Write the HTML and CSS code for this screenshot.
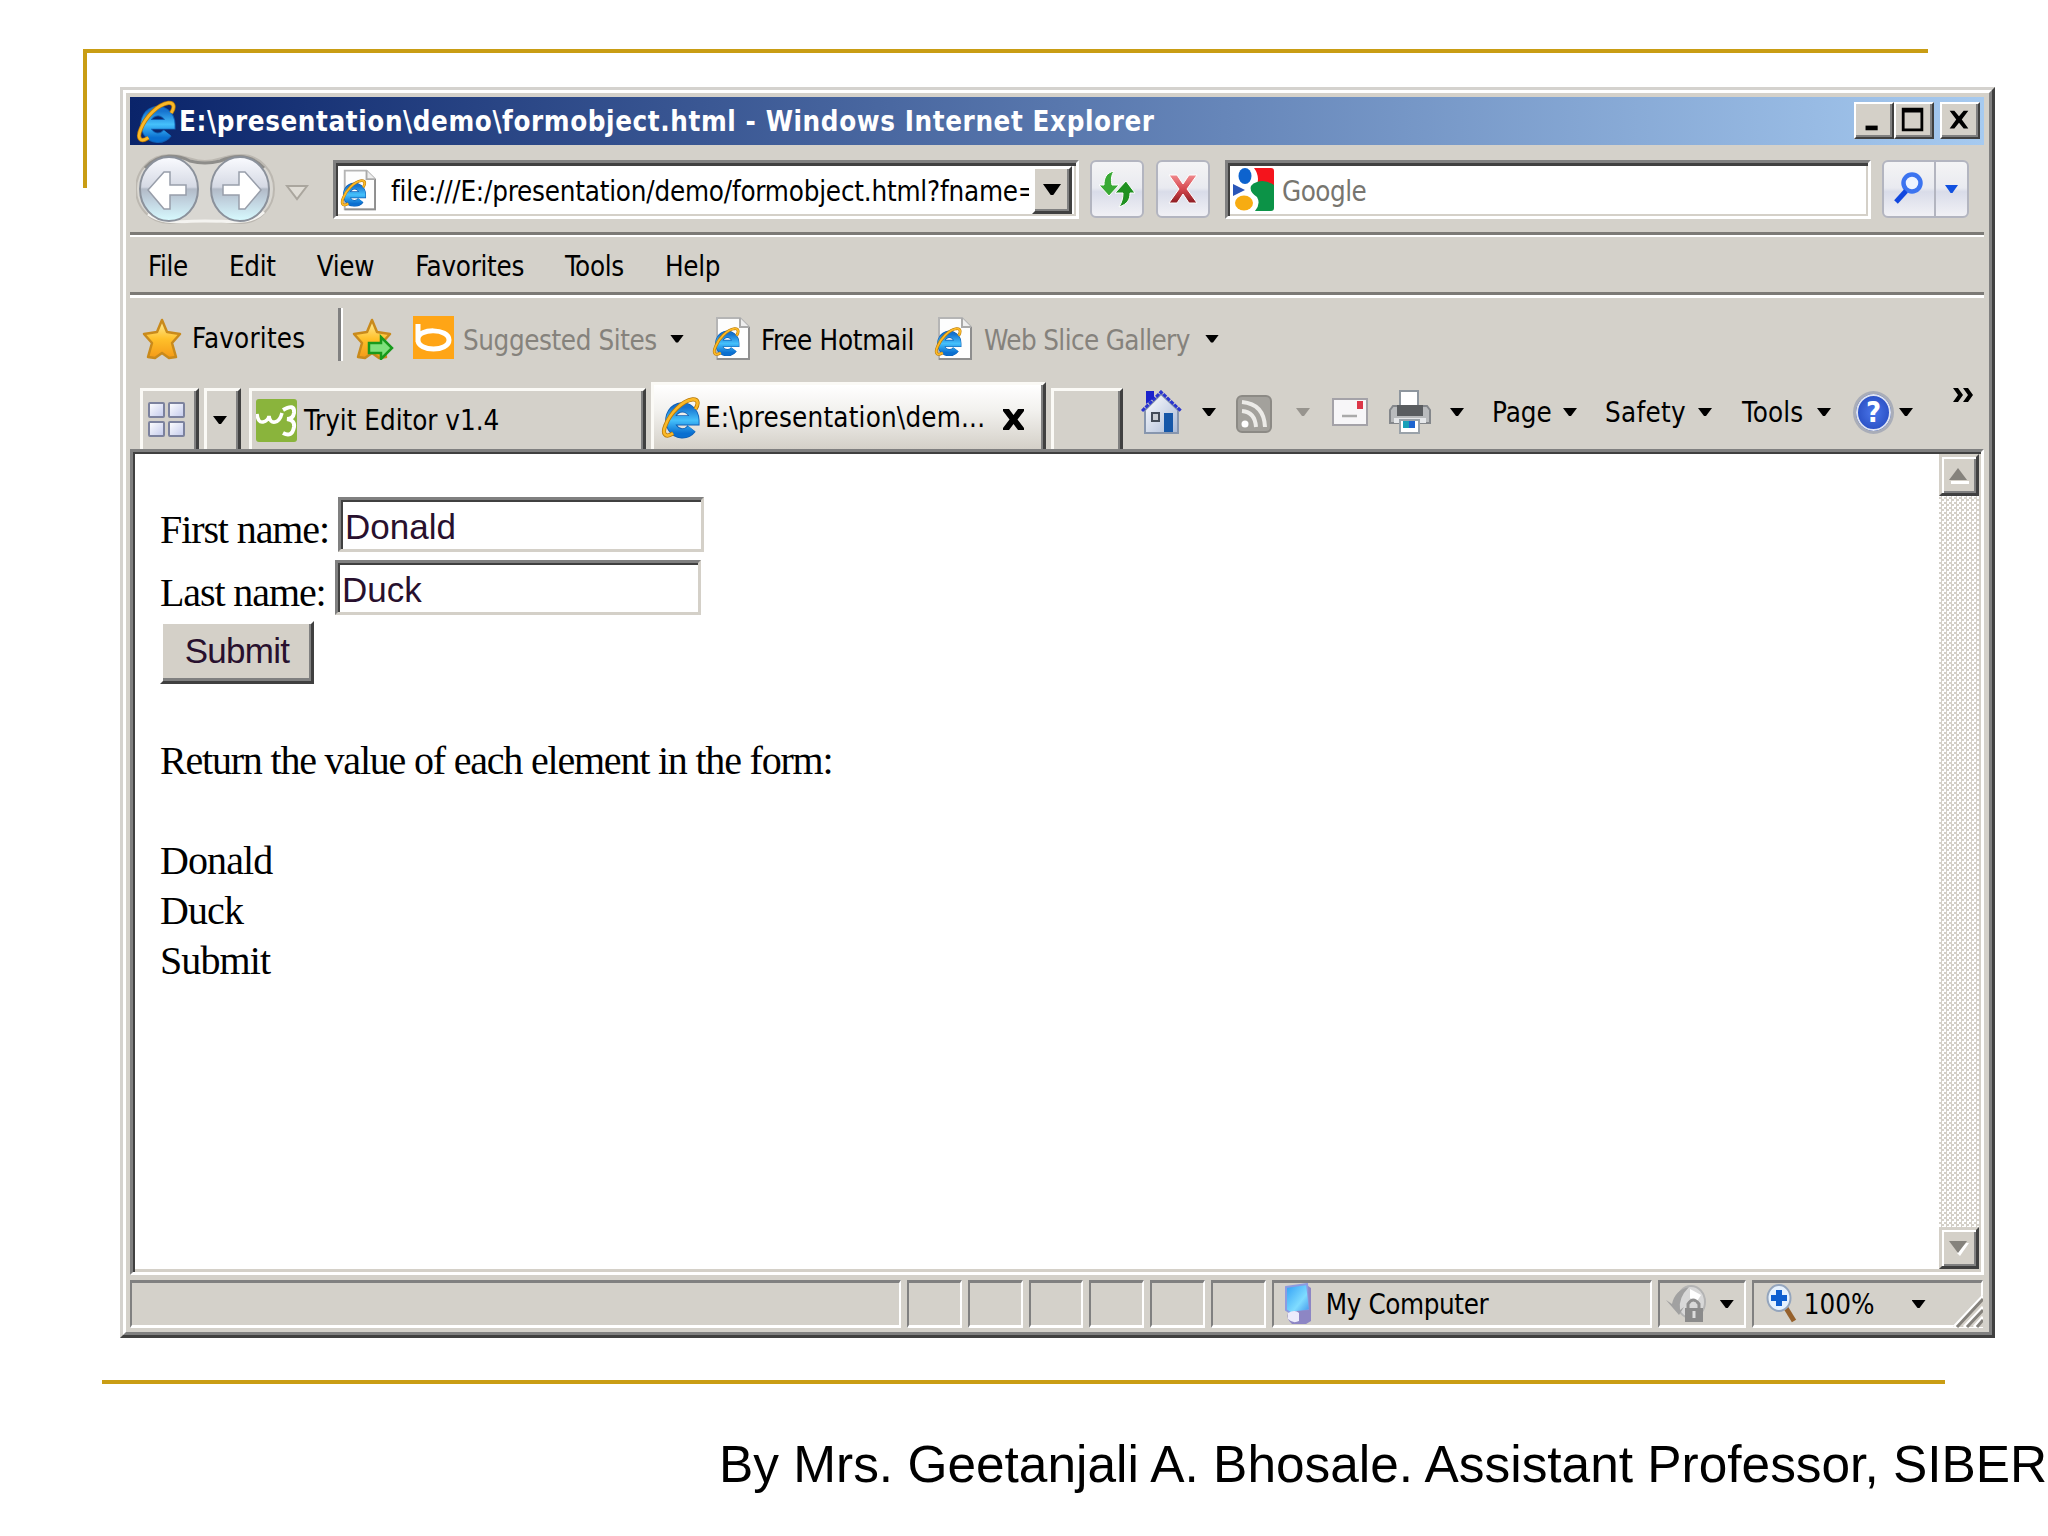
FILE: index.html
```
<!DOCTYPE html>
<html lang="en">
<head>
    <meta charset="UTF-8">
    <title>Form Object Demo</title>
    <link rel="stylesheet" href="styles.css">
</head>
<body>
    <!-- shared icons -->
    <svg class="defs" width="0" height="0">
        <defs>
            <linearGradient id="blue" x1="0" y1="0" x2="0" y2="1">
                <stop offset="0" stop-color="#1673cf"/><stop offset=".5" stop-color="#45c0fb"/><stop offset="1" stop-color="#0a6fd0"/>
            </linearGradient>
            <linearGradient id="gold" x1="0" y1="0" x2="0" y2="1">
                <stop offset="0" stop-color="#fff0a0"/><stop offset=".5" stop-color="#ffc02a"/><stop offset="1" stop-color="#f49a18"/>
            </linearGradient>
            <linearGradient id="ball" x1="0" y1="0" x2="0" y2="1">
                <stop offset="0" stop-color="#fafbff"/><stop offset=".47" stop-color="#d5d9e4"/><stop offset=".5" stop-color="#b2bac7"/><stop offset=".72" stop-color="#c3d6e2"/><stop offset="1" stop-color="#d8fbff"/>
            </linearGradient>
            <linearGradient id="pane" x1="0" y1="0" x2="1" y2="1">
                <stop offset="0" stop-color="#fff"/><stop offset="1" stop-color="#c3caec"/>
            </linearGradient>
            <linearGradient id="cross" x1="0" y1="0" x2="0" y2="1">
                <stop offset="0" stop-color="#f08a8e"/><stop offset=".5" stop-color="#d6484f"/><stop offset="1" stop-color="#8c1c22"/>
            </linearGradient>
            <linearGradient id="screen" x1="0" y1="0" x2="1" y2="1">
                <stop offset="0" stop-color="#2e9df5"/><stop offset=".6" stop-color="#7fdcff"/><stop offset="1" stop-color="#3a8de8"/>
            </linearGradient>
            <linearGradient id="wall" x1="0" y1="0" x2="1" y2="1">
                <stop offset="0" stop-color="#fff"/><stop offset="1" stop-color="#a9b9d6"/>
            </linearGradient>
        </defs>
        <symbol id="ie" viewBox="0 0 42 44">
            <path d="M12 25H36A13 14 0 1 0 33 34" fill="none" stroke="#0f5fb4" stroke-width="11"/>
            <path d="M12 25H36A13 14 0 1 0 33 34" fill="none" stroke="url(#blue)" stroke-width="9"/>
            <path d="M13 39C4 45 1 39 5 30C10 17 23 4 34 2.500C40 2 41 7 37 13" fill="none" stroke="#b87908" stroke-width="4.500"/>
            <path d="M13 39C4 45 1 39 5 30C10 17 23 4 34 2.500C40 2 41 7 37 13" fill="none" stroke="#fbb928" stroke-width="2.800"/>
        </symbol>
        <symbol id="page" viewBox="0 0 38 43">
            <path d="M5 1H28L37 10V42H5Z" fill="#fdfdfd" stroke="#b5b5b5" stroke-width="2"/>
            <path d="M5 42H37V10" fill="none" stroke="#8e8e8e" stroke-width="2"/>
            <path d="M28 1V10H37" fill="#eee" stroke="#aaa" stroke-width="2"/>
            <svg x="0" y="10" width="28" height="29" viewBox="0 0 42 44"><use href="#ie" width="42" height="44"/></svg>
        </symbol>
        <symbol id="star" viewBox="0 0 40 42">
            <path d="M20 2L25 14L38 16L30 25L34 39L27 40L20 35L13 40L6 39L10 25L2 16L15 14Z" fill="url(#gold)" stroke="#c98a1c" stroke-width="2.500" stroke-linejoin="round"/>
        </symbol>
    </svg>

    <div class="slide">
        <div class="corner"></div>

        <div class="window">
            <div class="window-inner">
                <div class="titlebar">
                    <svg class="title-icon"><use href="#ie"/></svg>
                    <span class="title">E:\presentation\demo\formobject.html - Windows Internet Explorer</span>
                    <div class="win-buttons">
                        <span class="win-btn"><svg viewBox="0 0 32 30"><path d="M8 21h13v5H8z"/></svg></span>
                        <span class="win-btn"><svg viewBox="0 0 32 30"><path d="M4 2h23v25H4zM7 7v17h17V7z" fill-rule="evenodd"/></svg></span>
                        <span class="win-btn close"><svg viewBox="0 0 32 30"><path d="M6 5h5l5 6 5-6h5l-7 9.500 7 9.500h-5l-5-6-5 6H6l7-9.500z"/></svg></span>
                    </div>
                </div>

                <div class="navbar">
                    <svg class="back-forward" viewBox="0 0 140 74">
                        <path d="M33 3C52 3 55 9 69 9S86 3 105 3A33 34 0 0 1 105 71C94 71 90 69 69 69S45 71 33 71A33 34 0 0 1 33 3Z" fill="#d9d7d2" stroke="#bcb8b1" stroke-width="2"/>
                        <path d="M12 62C28 73 40 69 69 69S115 73 128 60" fill="none" stroke="#f4f3f0" stroke-width="3"/>
                        <path d="M9 16C23 0 43 3 54 9Q69 13 84 9C98 3 114 1 128 16" fill="none" stroke="#8e8d8a" stroke-width="3"/>
                        <ellipse cx="33" cy="37" rx="29" ry="32" fill="url(#ball)" stroke="#8b919b" stroke-width="2"/>
                        <ellipse cx="104" cy="37" rx="29" ry="32" fill="url(#ball)" stroke="#8b919b" stroke-width="2"/>
                        <path d="M12 38L28 20H34V33H50V43H34V57H28Z" fill="#fff" stroke="#989eaa" stroke-width="1.500"/>
                        <path d="M125 38L109 20H103V33H87V43H103V57H109Z" fill="#fff" stroke="#989eaa" stroke-width="1.500"/>
                    </svg>
                    <svg class="recent" viewBox="0 0 24 18"><path d="M2 2H22L12 15Z" fill="#e0ddd6" stroke="#aaa69e" stroke-width="2"/></svg>
                    <div class="field address">
                        <svg class="page-icon"><use href="#page"/></svg>
                        <span class="url">file:///E:/presentation/demo/formobject.html?fname=</span>
                        <span class="drop-btn"><i class="arrow big"></i></span>
                    </div>
                    <div class="tool-btn refresh">
                        <svg viewBox="0 0 40 38">
                            <path d="M17 1C9 3 7 8 7 15H2L12 26L22 15H15C14 10 14 6 17 1Z" fill="#39a935" stroke="#fff" stroke-width="1"/>
                            <path d="M22 37C31 34 33 29 33 23H38L29 11L18 23H26C26 28 25 32 22 37Z" fill="#1f9120" stroke="#fff" stroke-width="1"/>
                        </svg>
                    </div>
                    <div class="tool-btn stop">
                        <svg viewBox="0 0 40 38"><path d="M6 5H14L20 14L26 5H34L24 19L34 33H26L20 24L14 33H6L16 19Z" fill="url(#cross)" stroke="#fff"/></svg>
                    </div>
                    <div class="field search">
                        <svg class="google" viewBox="0 0 41 43">
                            <path d="M21 0H38Q41 0 41 3V17H24Q27 8 21 0Z" fill="#f4141c"/>
                            <path d="M24 14Q32 11 41 17V40Q41 43 38 43H22Q28 36 24 29Q16 24 18 18Q20 15 24 14Z" fill="#0c9347"/>
                            <ellipse cx="12" cy="8" rx="6.500" ry="8" fill="#0d63ce"/>
                            <path d="M0 16L12 22L0 28Z" fill="#2a56b8"/>
                            <ellipse cx="11" cy="35" rx="9" ry="7.500" fill="#f7ac12"/>
                        </svg>
                        <span class="placeholder">Google</span>
                    </div>
                    <div class="tool-btn go">
                        <span class="go-main"><svg viewBox="0 0 34 36"><circle cx="20" cy="12" r="8.500" fill="#eef4ff" stroke="#3c74f0" stroke-width="4.500"/><path d="M14 20L4 31" stroke="#1147df" stroke-width="5"/></svg></span>
                        <span class="go-drop"><i class="arrow blue"></i></span>
                    </div>
                </div>

                <div class="menubar">
                    <span>File</span><span>Edit</span><span>View</span><span>Favorites</span><span>Tools</span><span>Help</span>
                </div>

                <div class="linksbar">
                    <svg class="star"><use href="#star"/></svg>
                    <span class="fav-label">Favorites</span>
                    <span class="divider"></span>
                    <svg class="star add" viewBox="0 0 42 42">
                        <use href="#star" width="40" height="42"/>
                        <path d="M17 25H29V19L40 30L29 41V35H17Z" fill="#7fe07c" stroke="#189a1c" stroke-width="2.500"/>
                    </svg>
                    <svg class="bing" viewBox="0 0 41 43"><rect width="41" height="43" fill="#ffa516"/><path d="M5 8V26M5 23C5 12 36 12 36 24S5 36 5 24" fill="none" stroke="#fff" stroke-width="5"/></svg>
                    <span class="muted suggested">Suggested Sites</span>
                    <i class="arrow"></i>
                    <svg class="link-page"><use href="#page"/></svg>
                    <span class="hotmail">Free Hotmail</span>
                    <svg class="link-page second"><use href="#page"/></svg>
                    <span class="muted gallery">Web Slice Gallery</span>
                    <i class="arrow"></i>
                </div>

                <div class="tabrow">
                    <div class="tab quick">
                        <svg viewBox="0 0 38 36">
                            <g fill="url(#pane)" stroke="#7c829e" stroke-width="2">
                                <rect x="1" y="1" width="15" height="14" rx="1"/><rect x="21" y="1" width="15" height="14" rx="1"/>
                                <rect x="1" y="20" width="15" height="14" rx="1"/><rect x="21" y="20" width="15" height="14" rx="1"/>
                            </g>
                        </svg>
                    </div>
                    <div class="tab list"><i class="arrow"></i></div>
                    <div class="tab tryit">
                        <svg class="w3" viewBox="0 0 41 43">
                            <rect width="41" height="43" rx="3" fill="#8ab43c"/>
                            <path d="M1 15Q2 24 7 23T13 17Q14 24 19 23T26 14" fill="none" stroke="#fff" stroke-width="3.500"/>
                            <path d="M27 11Q39 4 38 14Q37 20 31 20Q39 21 38 28Q36 39 27 34" fill="none" stroke="#fff" stroke-width="4"/>
                        </svg>
                        <span>Tryit Editor v1.4</span>
                    </div>
                    <div class="tab active">
                        <svg class="tab-ie"><use href="#ie"/></svg>
                        <span>E:\presentation\dem...</span>
                        <svg class="tab-close" viewBox="0 0 21 21"><path d="M0 0H6L10.500 6L15 0H21V2L14.500 10.500L21 19V21H15L10.500 15L6 21H0V19L6.500 10.500L0 2Z"/></svg>
                    </div>
                    <div class="tab new"></div>

                    <div class="commands">
                        <svg class="home" viewBox="0 0 41 44">
                            <path d="M4 20L20 4L37 20V43H4Z" fill="url(#wall)" stroke="#8796ae" stroke-width="2"/>
                            <path d="M1 21L20 2L40 21" fill="none" stroke="#2a35cf" stroke-width="3" stroke-dasharray="4 1"/>
                            <path d="M5 1H13V8L5 14Z" fill="#1a22cc"/>
                            <path d="M11 23H18V31H11Z" fill="#c9cdd2" stroke="#444c58" stroke-width="2"/>
                            <path d="M23 23H32V42H23Z" fill="#1657a8"/>
                        </svg>
                        <i class="arrow home-arrow"></i>
                        <svg class="rss" viewBox="0 0 36 38">
                            <rect x="1" y="1" width="34" height="36" rx="5" fill="#a3a19c" stroke="#8c8a85" stroke-width="2"/>
                            <circle cx="9" cy="29" r="3.500" fill="#fff"/>
                            <path d="M6 16Q19 17 20 32M6 7Q28 9 29 32" fill="none" stroke="#ecebe8" stroke-width="4"/>
                        </svg>
                        <i class="arrow off"></i>
                        <svg class="mail" viewBox="0 0 36 28">
                            <rect x="1" y="1" width="34" height="26" fill="#f7f6f8" stroke="#a4a2a8" stroke-width="2"/>
                            <rect x="25" y="3" width="6" height="8" fill="#dc3648"/><path d="M10 18H25" stroke="#aaa" stroke-width="2.500"/>
                        </svg>
                        <svg class="printer" viewBox="0 0 42 44">
                            <path d="M11 1H29V18H11Z" fill="#fff" stroke="#8e969e" stroke-width="2"/>
                            <path d="M4 16H38L41 20V33H1V20Z" fill="#b9bbbd" stroke="#84878b" stroke-width="2"/>
                            <path d="M8 15H34V26H8Z" fill="#5a5d60"/>
                            <path d="M5 28H37V33H5Z" fill="#e6e8ea"/>
                            <path d="M11 30H30V43H11Z" fill="#fff" stroke="#9aa2a9" stroke-width="2"/>
                            <path d="M14 31H20V38H14Z" fill="#18a0b8"/><path d="M20 31H26V38H20Z" fill="#1d64cf"/>
                        </svg>
                        <i class="arrow print-arrow"></i>
                        <span class="cmd page">Page</span><i class="arrow"></i>
                        <span class="cmd safety">Safety</span><i class="arrow"></i>
                        <span class="cmd tools">Tools</span><i class="arrow"></i>
                        <span class="help"><b>?</b></span><i class="arrow help-arrow"></i>
                        <svg class="more" viewBox="0 0 21 14"><path d="M1 0H6L11 7L6 14H1L6 7ZM11 0H16L21 7L16 14H11L16 7Z"/></svg>
                    </div>
                </div>

                <div class="viewport">
                    <div class="document">
                        <form>
                            <div class="row"><label>First name:</label><span class="input first">Donald</span></div>
                            <div class="row"><label class="last">Last name:</label><span class="input">Duck</span></div>
                            <span class="submit">Submit</span>
                        </form>
                        <p class="lead">Return the value of each element in the form:</p>
                        <p>Donald<br>Duck<br>Submit</p>
                    </div>
                    <div class="scrollbar">
                        <span class="scroll-btn"><svg viewBox="0 0 22 18"><path d="M3 15H21V18H3Z" fill="#fff"/><path d="M10 2L19 14H1Z" fill="#85827c"/></svg></span>
                        <span class="scroll-btn"><svg viewBox="0 0 22 18"><path d="M21 4L12 17L9 14L18 4Z" fill="#fff"/><path d="M1 2H19L10 14Z" fill="#85827c"/></svg></span>
                    </div>
                </div>

                <div class="statusbar">
                    <div class="panel message"></div>
                    <div class="panel"></div><div class="panel"></div><div class="panel"></div>
                    <div class="panel"></div><div class="panel"></div><div class="panel"></div>
                    <div class="panel zone">
                        <svg class="computer" viewBox="0 0 28 42">
                            <path d="M2 4L23 1L26 27L8 31L2 27Z" fill="url(#screen)" stroke="#8d9be0" stroke-width="2"/>
                            <path d="M24 3L27 5V38L22 41H8Q2 36 4 30L12 28L25 27Z" fill="#8d86c4"/>
                            <path d="M4 30Q11 26 15 30V38Q9 41 4 36Z" fill="#ecebfb"/>
                        </svg>
                        <span>My Computer</span>
                    </div>
                    <div class="panel protect">
                        <svg class="lock" viewBox="0 0 40 38">
                            <ellipse cx="25" cy="17" rx="14" ry="16" fill="#d8d8d8" stroke="#b4b4b4" stroke-width="2"/>
                            <path d="M0 15L6 19Q9 5 23 2Q12 13 14 25L18 22L13 30Z" fill="#a1a1a1"/>
                            <path d="M24 4L35 10L30 18L24 13Z" fill="#fff"/>
                            <path d="M22 24V19Q27 11 33 19V24" fill="none" stroke="#8e8e8e" stroke-width="3"/>
                            <path d="M19 23H37V37H19Z" fill="#8b8b8b"/><path d="M28 26V33" stroke="#ddd" stroke-width="3"/>
                        </svg>
                        <i class="arrow"></i>
                    </div>
                    <div class="panel zoom">
                        <svg class="magnify" viewBox="0 0 31 40">
                            <path d="M20 24L28 37" stroke="#96612c" stroke-width="5"/>
                            <ellipse cx="13" cy="14" rx="11.500" ry="13" fill="#e6f2ff" stroke="#94a5bd" stroke-width="2"/>
                            <path d="M13 6V22M5 14H21" stroke="#0e5fd0" stroke-width="6"/>
                        </svg>
                        <span>100%</span>
                        <i class="arrow"></i>
                        <svg class="grip" viewBox="0 0 30 32">
                            <path d="M0 32L30 0V32Z" fill="#d4d0c8"/>
                            <path d="M1 32L30 1M11 32L30 12M21 32L30 22" stroke="#fff" stroke-width="3"/>
                            <path d="M4 32L30 4M14 32L30 15M24 32L30 25" stroke="#85827c" stroke-width="3"/>
                        </svg>
                    </div>
                </div>
            </div>
        </div>

        <div class="rule"></div>
        <div class="footer">By Mrs. Geetanjali A. Bhosale. Assistant Professor, SIBER</div>
    </div>
</body>
</html>
```
FILE: styles.css
```
* {
    box-sizing: border-box;
}
body {
    margin: 0;
    background: #fff;
    color: #000;
    font-family: 'DejaVu Sans Condensed', 'DejaVu Sans', sans-serif;
    font-stretch: condensed;
    font-size: 27.5px;
    line-height: 32px;
}
svg {
    display: block;
    flex: none;
}
.defs {
    position: absolute;
}
.slide {
    width: 2048px;
    height: 1536px;
    overflow: hidden;
    padding-top: 49px;
}
.corner {
    width: 1845px;
    height: 139px;
    margin-left: 83px;
    border-top: 4px solid #c99d14;
    border-left: 4px solid #c99d14;
}

/* window frame */
.window {
    width: 1875px;
    height: 1251px;
    margin: -101px 0 0 120px;
    border: 3px solid;
    border-color: #d4d2ce #404040 #404040 #d4d2ce;
}
.window-inner {
    height: 1245px;
    padding: 4px 5px 5px 4px;
    background: #d4d1ca;
    border: 3px solid;
    border-color: #fff #808080 #808080 #fff;
}
.titlebar {
    display: flex;
    align-items: center;
    height: 48px;
    padding-left: 6px;
    background: linear-gradient(to right, #0a246a, #a6caf0);
    color: #fff;
    font-weight: bold;
}
.title-icon {
    width: 40px;
    height: 43px;
}
.title {
    margin-left: 3px;
    letter-spacing: .6px;
    white-space: nowrap;
}
.win-buttons {
    display: flex;
    margin: -2px 4px 0 auto;
}
.win-btn {
    width: 40px;
    height: 37px;
    padding: 2px 2px 2px 1px;
    background: #d4d0c8;
    border: 2px solid;
    border-color: #fff #404040 #404040 #fff;
    box-shadow: inset -2px -2px #808080;
}
.win-btn svg {
    width: 32px;
    height: 28px;
}
.win-btn.close {
    margin-left: 6px;
}

/* address and search */
.navbar {
    display: flex;
    align-items: flex-start;
    height: 87px;
    padding-top: 15px;
}
.back-forward {
    width: 140px;
    height: 74px;
    margin: -8px 0 0 6px;
}
.recent {
    width: 24px;
    height: 18px;
    margin: 24px 35px 0 9px;
}
.field {
    display: flex;
    align-items: center;
    height: 59px;
    background: #fff;
    border: 3px solid;
    border-color: #808080 #fff #fff #808080;
    box-shadow: inset 2px 3px #404040, inset -2px -2px #d4d0c8;
}
.address {
    width: 746px;
    margin-left: -11px;
    padding: 2px 4px 2px 4px;
}
.page-icon {
    width: 36px;
    height: 42px;
}
.url {
    width: 638px;
    margin: 2px 0 0 15px;
    overflow: hidden;
    letter-spacing: -.2px;
    white-space: nowrap;
}
.drop-btn {
    display: flex;
    align-items: center;
    justify-content: center;
    width: 40px;
    height: 48px;
    margin-left: auto;
    background: #d4d0c8;
    border: 3px solid;
    border-color: #fff #404040 #404040 #fff;
    box-shadow: inset -2px -2px #808080;
}
.arrow {
    flex: none;
    width: 14px;
    height: 8px;
    background: #000;
    clip-path: polygon(0 0, 100% 0, 57% 100%, 43% 100%);
}
.arrow.big {
    width: 18px;
    height: 11px;
}
.arrow.blue {
    width: 13px;
    height: 8px;
    background: #1150e0;
}
.arrow.off {
    background: #97948e;
}
.tool-btn {
    display: flex;
    align-items: center;
    justify-content: center;
    width: 54px;
    height: 58px;
    background: linear-gradient(#f4f4f5, #e9eaf0 48%, #d9dce9 55%, #f1f1f5);
    border: 2px solid #b3b5c0;
    border-radius: 6px;
}
.tool-btn svg {
    width: 40px;
    height: 38px;
}
.refresh {
    margin-left: 11px;
}
.stop {
    margin-left: 12px;
}
.search {
    width: 646px;
    margin-left: 15px;
    padding-left: 5px;
}
.google {
    width: 41px;
    height: 43px;
}
.placeholder {
    margin: 2px 0 0 8px;
    color: #77756f;
    letter-spacing: -.5px;
}
.go {
    width: 87px;
    margin-left: 11px;
}
.go-main {
    display: flex;
    align-items: center;
    justify-content: center;
    width: 52px;
    height: 54px;
    border-right: 2px solid #b3b5c0;
}
.go-main svg {
    width: 34px;
    height: 36px;
}
.go-drop {
    display: flex;
    flex: 1;
    justify-content: center;
}

/* menu and links */
.menubar {
    display: flex;
    gap: 41px;
    height: 66px;
    padding: 15px 0 0 18px;
    border-top: 3px solid #7c7a76;
    border-bottom: 3px solid #fff;
    box-shadow: inset 0 2px #fff, inset 0 -3px #7c7a76;
    letter-spacing: -.3px;
}
.linksbar {
    display: flex;
    align-items: center;
    height: 84px;
    padding: 0 0 3px 12px;
    white-space: nowrap;
}
.star {
    width: 40px;
    height: 42px;
}
.fav-label {
    width: 146px;
    margin: -2px 0 0 10px;
    letter-spacing: .2px;
}
.divider {
    width: 5px;
    height: 53px;
    margin-top: -8px;
    border-left: 3px solid #808080;
    border-right: 2px solid #fff;
}
.star.add {
    width: 42px;
    margin-left: 9px;
}
.bing {
    width: 41px;
    height: 43px;
    margin: -2px 0 0 19px;
}
.muted {
    color: #85827c;
}
.suggested {
    width: 198px;
    margin: 3px 9px 0 9px;
    letter-spacing: -.4px;
}
.link-page {
    width: 38px;
    height: 43px;
    margin-left: 28px;
}
.hotmail {
    width: 150px;
    margin: 3px 0 0 11px;
    letter-spacing: -.3px;
}
.link-page.second {
    margin-left: 23px;
}
.gallery {
    width: 210px;
    margin: 3px 11px 0 12px;
    letter-spacing: -.6px;
}

/* tabs and command bar */
.tabrow {
    display: flex;
    align-items: flex-end;
    height: 67px;
    padding-left: 10px;
    white-space: nowrap;
}
.tab {
    display: flex;
    flex: none;
    align-items: center;
    height: 61px;
    border: 3px solid;
    border-color: #fbfaf6 #404040 transparent #fbfaf6;
    border-bottom: 0;
    box-shadow: inset -2px 0 #808080;
}
.quick {
    width: 59px;
    padding-left: 5px;
}
.quick svg {
    width: 38px;
    height: 36px;
}
.list {
    width: 37px;
    margin-left: 5px;
    padding-left: 6px;
}
.tryit {
    width: 397px;
    margin-left: 8px;
    padding-left: 4px;
}
.w3 {
    width: 41px;
    height: 43px;
    margin-right: 7px;
}
.tab.active {
    width: 395px;
    height: 67px;
    margin-left: 5px;
    padding-left: 7px;
    background: linear-gradient(#fff, #f2f1ee 40%, #d4d0c8);
    letter-spacing: .2px;
}
.tab-ie {
    width: 39px;
    height: 43px;
    margin-right: 5px;
}
.tab-close {
    width: 21px;
    height: 21px;
    margin: 4px 19px 0 auto;
}
.tab.new {
    width: 72px;
    margin-left: 5px;
}
.commands {
    display: flex;
    align-items: center;
    height: 67px;
    padding-bottom: 7px;
}
.home {
    width: 41px;
    height: 44px;
    margin-left: 18px;
}
.home-arrow {
    margin-left: 20px;
}
.rss {
    width: 36px;
    height: 38px;
    margin: 4px 24px 0 20px;
}
.mail {
    width: 36px;
    height: 28px;
    margin-left: 22px;
}
.printer {
    width: 42px;
    height: 44px;
    margin-left: 21px;
}
.print-arrow {
    margin-left: 19px;
}
.cmd {
    margin-left: 28px;
}
.page {
    width: 71px;
}
.safety {
    width: 93px;
    letter-spacing: .3px;
}
.tools {
    width: 75px;
    margin-left: 30px;
    letter-spacing: .2px;
}
.help {
    width: 41px;
    height: 43px;
    margin-left: 22px;
    border: 3px solid #a9adb8;
    border-radius: 50%;
    background: radial-gradient(#4a76ea, #1c3fb4);
    box-shadow: inset 0 0 0 2px #dfe4f2;
    color: #fff;
    font-size: 29px;
    line-height: 37px;
    text-align: center;
}
.help-arrow {
    margin-left: 5px;
}
.more {
    width: 21px;
    height: 14px;
    margin: -34px 0 0 39px;
}

/* page content */
.viewport {
    display: flex;
    height: 826px;
    background: #fff;
    border: 3px solid;
    border-color: #808080 #fff #fff #808080;
    box-shadow: inset 2px 2px #404040, inset -2px -3px #d4d0c8;
    padding: 2px 2px 3px;
}
.document {
    flex: 1;
    padding: 43px 0 0 25px;
    font-family: 'Liberation Serif', serif;
    font-size: 40px;
    line-height: 50px;
}
.row {
    display: flex;
    height: 63px;
    white-space: nowrap;
}
.row label {
    width: 178px;
    padding-top: 8px;
    letter-spacing: -1.1px;
}
.row .last {
    width: 175px;
}
.input {
    width: 366px;
    height: 55px;
    padding: 2px 0 0 4px;
    border: 3px solid;
    border-color: #808080 #d4d0c8 #d4d0c8 #808080;
    box-shadow: inset 2px 2px #404040;
    font-family: 'Liberation Sans', Arial, sans-serif;
    font-size: 35px;
    line-height: 49px;
    color: #28102e;
}
.submit {
    display: block;
    width: 154px;
    height: 63px;
    margin-top: -2px;
    border: 3px solid;
    border-color: #fff #404040 #404040 #fff;
    box-shadow: inset -2px -3px #808080;
    background: #d4d0c8;
    font-family: 'Liberation Sans', Arial, sans-serif;
    font-size: 35px;
    line-height: 53px;
    letter-spacing: -.7px;
    text-align: center;
    color: #28102e;
}
.document p {
    margin: 50px 0 0;
    letter-spacing: -.9px;
}
.document .lead {
    margin-top: 52px;
    letter-spacing: -1.2px;
}
.scrollbar {
    display: flex;
    flex-direction: column;
    justify-content: space-between;
    width: 40px;
    background: repeating-conic-gradient(#d4d0c8 0 25%, #fff 0 50%) 0 0 / 5px 5px;
}
.scroll-btn {
    display: flex;
    align-items: center;
    justify-content: center;
    height: 42px;
    background: #d4d0c8;
    border: 3px solid;
    border-color: #d4d0c8 #404040 #404040 #d4d0c8;
    box-shadow: inset 2px 2px #fff, inset -2px -2px #808080;
}
.scroll-btn svg {
    width: 22px;
    height: 18px;
}

/* status bar */
.statusbar {
    display: flex;
    gap: 6px;
    height: 53px;
    padding-top: 5px;
}
.panel {
    display: flex;
    flex: none;
    align-items: center;
    width: 54.8px;
    height: 48px;
    border: 3px solid;
    border-color: #808080 #fff #fff #808080;
    border-width: 3px 2px 3px 2px;
}
.message {
    width: 771px;
}
.zone {
    width: 380px;
    padding-left: 10px;
    letter-spacing: -.4px;
}
.computer {
    width: 28px;
    height: 42px;
    margin-right: 14px;
}
.protect {
    width: 88px;
    padding-left: 6px;
}
.lock {
    width: 40px;
    height: 38px;
    margin-right: 14px;
}
.zoom {
    position: relative;
    width: 231px;
    padding-left: 12px;
}
.magnify {
    width: 31px;
    height: 40px;
    margin-right: 7px;
}
.zoom .arrow {
    margin-left: 37px;
}
.grip {
    position: absolute;
    right: -2px;
    bottom: -3px;
    width: 30px;
    height: 34px;
}

/* slide footer */
.rule {
    width: 1843px;
    height: 4px;
    margin: 42px 0 0 102px;
    background: #c99d14;
}
.footer {
    margin: 51px 0 0 719px;
    font-family: 'Liberation Sans', Arial, sans-serif;
    font-size: 51.4px;
    line-height: 58px;
    white-space: nowrap;
}
```
